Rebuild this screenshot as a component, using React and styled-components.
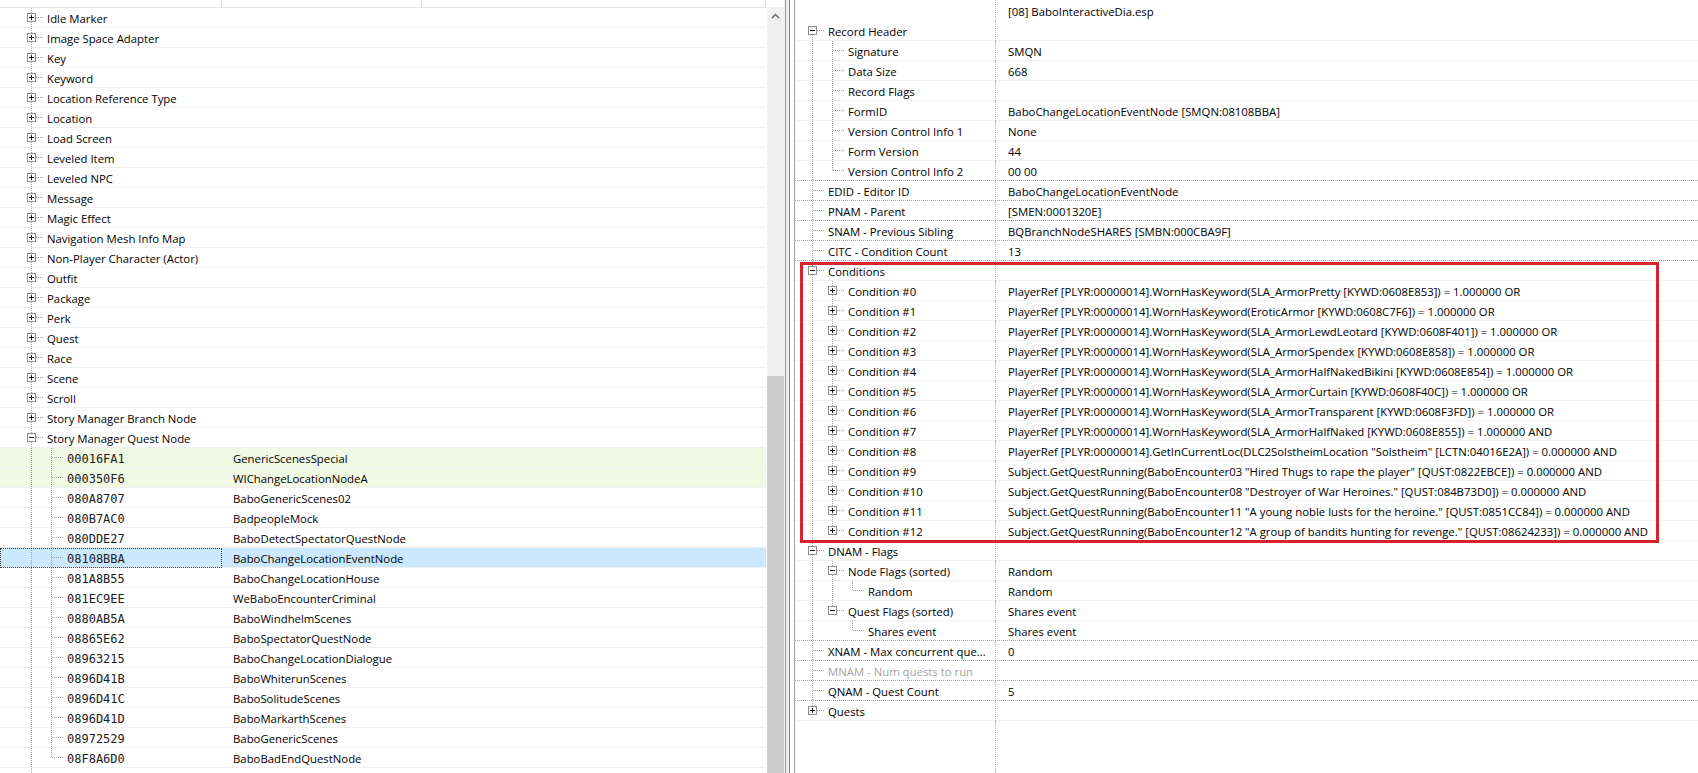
import React from 'react';
import styled, { createGlobalStyle, css } from 'styled-components';

const Global = createGlobalStyle`
  html, body { margin: 0; padding: 0; background: #fff; }
  body {
    font-family: "Open Sans", "Noto Sans", sans-serif;
    font-size: 11.35px;
    color: #000;
  }
`;

const UI_FONT = `"Open Sans", "Noto Sans", sans-serif`;

const Screen = styled.div`
  position: relative;
  display: flex;
  width: 1698px;
  height: 773px;
  overflow: hidden;
  background: #fff;
  font-family: ${UI_FONT};
  font-size: 11.35px;
`;

/* ---------- tree connector drawing ---------- */
const GlyphSvg = styled.svg`
  flex: none;
  display: block;
  overflow: visible;
  shape-rendering: crispEdges;
`;

const DOT = { stroke: '#a0a0a0', strokeWidth: 1, strokeDasharray: '1 1' };

function TreeGlyph({ kind, up, down, box }) {
  if (kind === 'blank') return <GlyphSvg width="20" height="20" />;
  if (kind === 'pipe')
    return (
      <GlyphSvg width="20" height="20">
        <line x1="9.5" y1="0" x2="9.5" y2="20" {...DOT} />
      </GlyphSvg>
    );
  return (
    <GlyphSvg width="20" height="20">
      {up && <line x1="9.5" y1="0" x2="9.5" y2={box ? 5 : 10} {...DOT} />}
      {down && <line x1="9.5" y1={box ? 14 : 10} x2="9.5" y2="20" {...DOT} />}
      <line x1={box ? 14 : 10} y1="9.5" x2="22" y2="9.5" {...DOT} />
      {box && (
        <g>
          <rect x="5.5" y="5.5" width="8" height="8" fill="#fff" stroke="#8f8f8f" />
          <line x1="7" y1="9.5" x2="12" y2="9.5" stroke="#1a1a1a" />
          {box === 'plus' && <line x1="9.5" y1="7" x2="9.5" y2="12" stroke="#1a1a1a" />}
        </g>
      )}
    </GlyphSvg>
  );
}

function Tree({ guides = [], node }) {
  return (
    <>
      {guides.map((g, i) => (
        <TreeGlyph key={i} kind={g} />
      ))}
      <TreeGlyph kind="node" {...node} />
    </>
  );
}

/* ---------- left navigation list ---------- */
const LeftPane = styled.div`
  display: flex;
  flex: none;
  width: 784px;
  height: 100%;
`;

const NavList = styled.div`
  display: flex;
  flex-direction: column;
  width: 767px;
  flex: none;
  overflow: hidden;
`;

const NavHeader = styled.div`
  display: flex;
  flex: none;
  height: 8px;
  box-shadow: inset 0 -1px 0 #e5e5e5;
`;

const NavHeaderCell = styled.div`
  flex: none;
  width: ${(p) => p.$w}px;
  box-sizing: border-box;
  border-right: 1px solid #e5e5e5;
`;

const toneBg = {
  green: '#f1f8e4',
  selected: '#cce8ff',
  plain: '#fff',
};

const NavRow = styled.div`
  display: flex;
  flex: none;
  width: 766px;
  height: ${(p) => (p.$tail ? 5 : 20)}px;
  overflow: hidden;
  background: ${(p) => toneBg[p.$tone || 'plain']};
  box-shadow: ${(p) => (p.$tail ? 'none' : 'inset 0 -1px 0 #f0f0f0')};
`;

const NavName = styled.div`
  display: flex;
  align-items: flex-start;
  flex: none;
  width: 222px;
  box-sizing: border-box;
  padding-left: 22px;
  overflow: hidden;
  ${(p) =>
    p.$focus &&
    css`
      outline: 1px dotted #3a3a3a;
      outline-offset: -1px;
    `}
`;

const Label = styled.span`
  margin-left: 5px;
  margin-top: 1px;
  line-height: 20px;
  white-space: nowrap;
  color: ${(p) => (p.$dim ? '#a3a3a3' : '#000')};
`;

const HexLabel = styled.span`
  margin-left: 5px;
  margin-top: 1px;
  line-height: 20px;
  white-space: nowrap;
  font-family: "DejaVu Sans Mono", "Liberation Mono", monospace;
  font-size: 12px;
  color: #1c1c1c;
`;

const NavEditorId = styled.div`
  flex: none;
  width: 200px;
  box-sizing: border-box;
  padding-left: 11px;
  padding-top: 1px;
  line-height: 20px;
  white-space: nowrap;
`;

/* ---------- scrollbar ---------- */
const ScrollBar = styled.div`
  display: flex;
  flex-direction: column;
  flex: none;
  width: 17px;
  height: 100%;
`;

const ScrollTopGap = styled.div`
  flex: none;
  height: 7px;
  background: #fff;
`;

const ScrollButton = styled.div`
  display: flex;
  align-items: center;
  justify-content: center;
  flex: none;
  height: 17px;
  background: #f0f0f0;
`;

const ScrollTrack = styled.div`
  display: flex;
  flex-direction: column;
  flex: 1;
  background: #f0f0f0;
`;

const ScrollThumb = styled.div`
  flex: 1;
  margin-top: ${(p) => p.$offset}px;
  background: #cdcdcd;
`;

/* ---------- splitter ---------- */
const Splitter = styled.div`
  flex: none;
  width: 11px;
  height: 100%;
  background: linear-gradient(
    to right,
    #f4f4f4 0 1px,
    #9a9a9a 1px 2px,
    #ececec 2px 5px,
    #8a8a8a 5px 6px,
    #ffffff 6px 10px,
    #a8a8a8 10px 11px
  );
`;

/* ---------- right record view ---------- */
const RightPane = styled.div`
  display: flex;
  flex-direction: column;
  flex: 1;
  min-width: 0;
  height: 100%;
`;

const dottedDark = 'linear-gradient(to right, #a3a3a3 50%, transparent 50%)';
const lightLine = 'linear-gradient(#f0f0f0, #f0f0f0)';

const RecRow = styled.div`
  display: flex;
  flex: none;
  height: ${(p) => (p.$head ? 21 : 20)}px;
  background-image: ${(p) => (p.$head ? 'none' : p.$dark ? dottedDark : lightLine)};
  background-size: ${(p) => (p.$dark ? '2px 1px' : '100% 1px')};
  background-repeat: ${(p) => (p.$dark ? 'repeat-x' : 'no-repeat')};
  background-position: left bottom;
`;

const RecFill = styled.div`
  display: flex;
  flex: 1;
`;

const RecName = styled.div`
  display: flex;
  align-items: flex-start;
  flex: none;
  width: 201px;
  box-sizing: border-box;
  padding-left: 8px;
  border-right: 1px dotted #b4b4b4;
  overflow: hidden;
`;

const RecValue = styled.div`
  flex: 1;
  min-width: 0;
  padding-left: 12px;
  padding-top: 1px;
  line-height: ${(p) => (p.$head ? 21 : 20)}px;
  white-space: nowrap;
  overflow: hidden;
`;

const Annotation = styled.div`
  position: absolute;
  left: 800px;
  top: 262px;
  width: 859px;
  height: 281px;
  box-sizing: border-box;
  border: 3px solid #d6232c;
  pointer-events: none;
`;

/* ---------- data ---------- */
const rootTypes = [
  'Idle Marker',
  'Image Space Adapter',
  'Key',
  'Keyword',
  'Location Reference Type',
  'Location',
  'Load Screen',
  'Leveled Item',
  'Leveled NPC',
  'Message',
  'Magic Effect',
  'Navigation Mesh Info Map',
  'Non-Player Character (Actor)',
  'Outfit',
  'Package',
  'Perk',
  'Quest',
  'Race',
  'Scene',
  'Scroll',
  'Story Manager Branch Node',
];

const questNodes = [
  ['00016FA1', 'GenericScenesSpecial', 'green'],
  ['000350F6', 'WIChangeLocationNodeA', 'green'],
  ['080A8707', 'BaboGenericScenes02'],
  ['080B7AC0', 'BadpeopleMock'],
  ['080DDE27', 'BaboDetectSpectatorQuestNode'],
  ['08108BBA', 'BaboChangeLocationEventNode', 'selected'],
  ['081A8B55', 'BaboChangeLocationHouse'],
  ['081EC9EE', 'WeBaboEncounterCriminal'],
  ['0880AB5A', 'BaboWindhelmScenes'],
  ['08865E62', 'BaboSpectatorQuestNode'],
  ['08963215', 'BaboChangeLocationDialogue'],
  ['0896D41B', 'BaboWhiterunScenes'],
  ['0896D41C', 'BaboSolitudeScenes'],
  ['0896D41D', 'BaboMarkarthScenes'],
  ['08972529', 'BaboGenericScenes'],
  ['08F8A6D0', 'BaboBadEndQuestNode'],
];

const P = 'PlayerRef [PLYR:00000014].';
const S = 'Subject.GetQuestRunning(';
const conditionValues = [
  `${P}WornHasKeyword(SLA_ArmorPretty [KYWD:0608E853]) = 1.000000 OR`,
  `${P}WornHasKeyword(EroticArmor [KYWD:0608C7F6]) = 1.000000 OR`,
  `${P}WornHasKeyword(SLA_ArmorLewdLeotard [KYWD:0608F401]) = 1.000000 OR`,
  `${P}WornHasKeyword(SLA_ArmorSpendex [KYWD:0608E858]) = 1.000000 OR`,
  `${P}WornHasKeyword(SLA_ArmorHalfNakedBikini [KYWD:0608E854]) = 1.000000 OR`,
  `${P}WornHasKeyword(SLA_ArmorCurtain [KYWD:0608F40C]) = 1.000000 OR`,
  `${P}WornHasKeyword(SLA_ArmorTransparent [KYWD:0608F3FD]) = 1.000000 OR`,
  `${P}WornHasKeyword(SLA_ArmorHalfNaked [KYWD:0608E855]) = 1.000000 AND`,
  `${P}GetInCurrentLoc(DLC2SolstheimLocation "Solstheim" [LCTN:04016E2A]) = 0.000000 AND`,
  `${S}BaboEncounter03 "Hired Thugs to rape the player" [QUST:0822EBCE]) = 0.000000 AND`,
  `${S}BaboEncounter08 "Destroyer of War Heroines." [QUST:084B73D0]) = 0.000000 AND`,
  `${S}BaboEncounter11 "A young noble lusts for the heroine." [QUST:0851CC84]) = 0.000000 AND`,
  `${S}BaboEncounter12 "A group of bandits hunting for revenge." [QUST:08624233]) = 0.000000 AND`,
];

const mid = { up: true, down: true };
const last = { up: true, down: false };

const recordRows = [
  { name: 'Record Header', node: { up: false, down: true, box: 'minus' } },
  { name: 'Signature', value: 'SMQN', guides: ['pipe'], node: mid },
  { name: 'Data Size', value: '668', guides: ['pipe'], node: mid },
  { name: 'Record Flags', value: '', guides: ['pipe'], node: mid },
  { name: 'FormID', value: 'BaboChangeLocationEventNode [SMQN:08108BBA]', guides: ['pipe'], node: mid },
  { name: 'Version Control Info 1', value: 'None', guides: ['pipe'], node: mid },
  { name: 'Form Version', value: '44', guides: ['pipe'], node: mid },
  { name: 'Version Control Info 2', value: '00 00', guides: ['pipe'], node: last },
  { name: 'EDID - Editor ID', value: 'BaboChangeLocationEventNode', node: mid, rootLeaf: true },
  { name: 'PNAM - Parent', value: '[SMEN:0001320E]', node: mid, rootLeaf: true },
  { name: 'SNAM - Previous Sibling', value: 'BQBranchNodeSHARES [SMBN:000CBA9F]', node: mid, rootLeaf: true },
  { name: 'CITC - Condition Count', value: '13', node: mid, rootLeaf: true },
  { name: 'Conditions', node: { ...mid, box: 'minus' } },
  ...conditionValues.map((v, i) => ({
    name: `Condition #${i}`,
    value: v,
    guides: ['pipe'],
    node: { up: true, down: i < conditionValues.length - 1, box: 'plus' },
  })),
  { name: 'DNAM - Flags', node: { ...mid, box: 'minus' } },
  { name: 'Node Flags (sorted)', value: 'Random', guides: ['pipe'], node: { ...mid, box: 'minus' } },
  { name: 'Random', value: 'Random', guides: ['pipe', 'pipe'], node: last },
  { name: 'Quest Flags (sorted)', value: 'Shares event', guides: ['pipe'], node: { ...last, box: 'minus' } },
  { name: 'Shares event', value: 'Shares event', guides: ['pipe', 'blank'], node: last },
  { name: 'XNAM - Max concurrent que...', value: '0', node: mid, rootLeaf: true },
  { name: 'MNAM - Num quests to run', value: '', node: mid, rootLeaf: true, dim: true },
  { name: 'QNAM - Quest Count', value: '5', node: mid, rootLeaf: true },
  { name: 'Quests', node: { ...last, box: 'plus' } },
];

function ScrollChevron() {
  return (
    <svg width="9" height="6" viewBox="0 0 9 6">
      <path d="M1 5 L4.5 1.5 L8 5" fill="none" stroke="#606060" strokeWidth="1.4" />
    </svg>
  );
}

export default function App() {
  return (
    <>
      <Global />
      <Screen>
        <LeftPane>
          <NavList>
            <NavHeader>
              <NavHeaderCell $w={222} />
              <NavHeaderCell $w={200} />
              <NavHeaderCell $w={344} />
            </NavHeader>
            {rootTypes.map((t) => (
              <NavRow key={t}>
                <NavName>
                  <Tree node={{ up: true, down: true, box: 'plus' }} />
                  <Label>{t}</Label>
                </NavName>
              </NavRow>
            ))}
            <NavRow>
              <NavName>
                <Tree node={{ up: true, down: true, box: 'minus' }} />
                <Label>Story Manager Quest Node</Label>
              </NavName>
            </NavRow>
            {questNodes.map(([id, edid, tone], i) => (
              <NavRow key={id} $tone={tone}>
                <NavName $focus={tone === 'selected'}>
                  <Tree guides={['pipe']} node={{ up: true, down: i < questNodes.length - 1 }} />
                  <HexLabel>{id}</HexLabel>
                </NavName>
                <NavEditorId>{edid}</NavEditorId>
              </NavRow>
            ))}
            <NavRow $tail>
              <NavName>
                <TreeGlyph kind="pipe" />
              </NavName>
            </NavRow>
          </NavList>
          <ScrollBar>
            <ScrollTopGap />
            <ScrollButton>
              <ScrollChevron />
            </ScrollButton>
            <ScrollTrack>
              <ScrollThumb $offset={352} />
            </ScrollTrack>
          </ScrollBar>
        </LeftPane>

        <Splitter />

        <RightPane>
          <RecRow $head>
            <RecName />
            <RecValue $head>[08] BaboInteractiveDia.esp</RecValue>
          </RecRow>
          {recordRows.map((r, i) => {
            const next = recordRows[i + 1];
            const dark = r.rootLeaf || (next && next.rootLeaf);
            return (
              <RecRow key={i} $dark={dark}>
                <RecName>
                  <Tree guides={r.guides} node={r.node} />
                  <Label $dim={r.dim}>{r.name}</Label>
                </RecName>
                <RecValue>{r.value}</RecValue>
              </RecRow>
            );
          })}
          <RecFill>
            <RecName />
          </RecFill>
        </RightPane>

        <Annotation />
      </Screen>
    </>
  );
}
